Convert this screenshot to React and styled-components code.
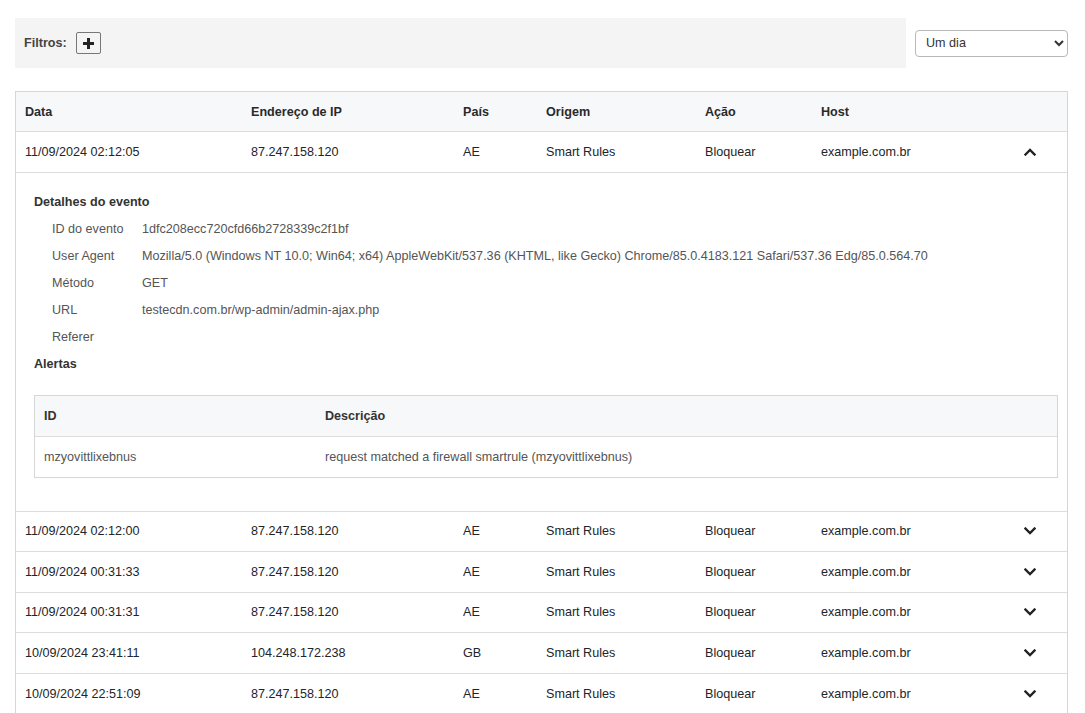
import React from "react";
import styled, { createGlobalStyle } from "styled-components";

const Global = createGlobalStyle`
  html, body { margin: 0; padding: 0; background: #fff; }
  body {
    font-family: "Liberation Sans", Arial, sans-serif;
    font-size: 12.6px;
    color: #212529;
  }
  * { box-sizing: border-box; }
`;

const Page = styled.div`
  padding: 18px 17px 0 15px;
`;

const Toolbar = styled.div`
  display: flex;
  align-items: center;
  gap: 9px;
`;

const FilterBar = styled.div`
  flex: 1;
  height: 50px;
  background: #f4f4f4;
  display: flex;
  align-items: center;
  padding-left: 9px;
  gap: 9px;
`;

const FilterLabel = styled.span`
  font-weight: bold;
  color: #444;
`;

const AddButton = styled.button`
  width: 25px;
  height: 22px;
  padding: 0;
  border: 1px solid #777;
  border-radius: 2px;
  background: #f4f4f4;
  display: flex;
  align-items: center;
  justify-content: center;
  cursor: pointer;
`;

const Select = styled.select`
  width: 153px;
  height: 27px;
  border: 1px solid #b8b8b8;
  border-radius: 4px;
  background: #fff;
  font-family: "Liberation Sans", Arial, sans-serif;
  font-size: 12.6px;
  color: #333;
  padding: 0 4px 0 6px;
`;

const Table = styled.div`
  margin-top: 23px;
  border: 1px solid #d6d6d6;
`;

const cols = "226px 212px 83px 159px 116px 1fr 74px";

const HeadRow = styled.div`
  display: grid;
  grid-template-columns: ${cols};
  height: 40px;
  align-items: center;
  background: #f7f8fa;
  border-bottom: 1px solid #dcdcdc;
  font-weight: bold;
  color: #2a2a2a;
`;

const Row = styled.div`
  display: grid;
  grid-template-columns: ${cols};
  height: 40.5px;
  align-items: center;
  border-bottom: ${(p) => (p.$last ? "none" : "1px solid #dcdcdc")};
`;

const Cell = styled.div`
  padding: 0 9px;
  white-space: nowrap;
`;

const ToggleCell = styled.div`
  display: flex;
  justify-content: center;
  align-items: center;
`;

const Details = styled.div`
  padding: 16px 9px 33px 18px;
  border-bottom: 1px solid #dcdcdc;
`;

const SectionTitle = styled.div`
  height: 27px;
  line-height: 27px;
  font-weight: bold;
  color: #333;
`;

const DetailRow = styled.div`
  display: grid;
  grid-template-columns: 90px 1fr;
  padding-left: 18px;
  height: 27px;
  line-height: 27px;
  color: #555;
  white-space: nowrap;
`;

const AlertTable = styled.div`
  margin-top: 17px;
  border: 1px solid #d6d6d6;
`;

const alertCols = "281px 1fr";

const AlertHead = styled.div`
  display: grid;
  grid-template-columns: ${alertCols};
  height: 41px;
  align-items: center;
  background: #f7f8fa;
  border-bottom: 1px solid #dcdcdc;
  font-weight: bold;
  color: #333;
`;

const AlertRow = styled.div`
  display: grid;
  grid-template-columns: ${alertCols};
  height: 40px;
  align-items: center;
  color: #555;
`;

const Chevron = ({ up }) => (
  <svg width="12" height="8" viewBox="0 0 12 8">
    <polyline
      points={up ? "1.5,6.5 6,2 10.5,6.5" : "1.5,1.5 6,6 10.5,1.5"}
      fill="none"
      stroke="#222"
      strokeWidth="2.3"
      strokeLinecap="square"
    />
  </svg>
);

const Plus = () => (
  <svg width="11" height="11" viewBox="0 0 11 11">
    <rect x="4" y="0" width="3" height="11" fill="#222" />
    <rect x="0" y="4" width="11" height="3" fill="#222" />
  </svg>
);

const rows = [
  ["11/09/2024 02:12:00", "87.247.158.120", "AE"],
  ["11/09/2024 00:31:33", "87.247.158.120", "AE"],
  ["11/09/2024 00:31:31", "87.247.158.120", "AE"],
  ["10/09/2024 23:41:11", "104.248.172.238", "GB"],
  ["10/09/2024 22:51:09", "87.247.158.120", "AE"],
];

const details = [
  ["ID do evento", "1dfc208ecc720cfd66b2728339c2f1bf"],
  [
    "User Agent",
    "Mozilla/5.0 (Windows NT 10.0; Win64; x64) AppleWebKit/537.36 (KHTML, like Gecko) Chrome/85.0.4183.121 Safari/537.36 Edg/85.0.564.70",
  ],
  ["Método", "GET"],
  ["URL", "testecdn.com.br/wp-admin/admin-ajax.php"],
  ["Referer", ""],
];

export default function App() {
  return (
    <>
      <Global />
      <Page>
        <Toolbar>
          <FilterBar>
            <FilterLabel>Filtros:</FilterLabel>
            <AddButton aria-label="Adicionar filtro">
              <Plus />
            </AddButton>
          </FilterBar>
          <Select defaultValue="dia">
            <option value="dia">Um dia</option>
            <option value="semana">Uma semana</option>
          </Select>
        </Toolbar>

        <Table>
          <HeadRow>
            <Cell>Data</Cell>
            <Cell>Endereço de IP</Cell>
            <Cell>País</Cell>
            <Cell>Origem</Cell>
            <Cell>Ação</Cell>
            <Cell>Host</Cell>
            <Cell />
          </HeadRow>
          <Row>
            <Cell>11/09/2024 02:12:05</Cell>
            <Cell>87.247.158.120</Cell>
            <Cell>AE</Cell>
            <Cell>Smart Rules</Cell>
            <Cell>Bloquear</Cell>
            <Cell>example.com.br</Cell>
            <ToggleCell>
              <Chevron up />
            </ToggleCell>
          </Row>
          <Details>
            <SectionTitle>Detalhes do evento</SectionTitle>
            {details.map(([k, v]) => (
              <DetailRow key={k}>
                <span>{k}</span>
                <span>{v}</span>
              </DetailRow>
            ))}
            <SectionTitle>Alertas</SectionTitle>
            <AlertTable>
              <AlertHead>
                <Cell>ID</Cell>
                <Cell>Descrição</Cell>
              </AlertHead>
              <AlertRow>
                <Cell>mzyovittlixebnus</Cell>
                <Cell>request matched a firewall smartrule (mzyovittlixebnus)</Cell>
              </AlertRow>
            </AlertTable>
          </Details>
          {rows.map(([d, ip, c], i) => (
            <Row key={d} $last={i === rows.length - 1}>
              <Cell>{d}</Cell>
              <Cell>{ip}</Cell>
              <Cell>{c}</Cell>
              <Cell>Smart Rules</Cell>
              <Cell>Bloquear</Cell>
              <Cell>example.com.br</Cell>
              <ToggleCell>
                <Chevron />
              </ToggleCell>
            </Row>
          ))}
        </Table>
      </Page>
    </>
  );
}
